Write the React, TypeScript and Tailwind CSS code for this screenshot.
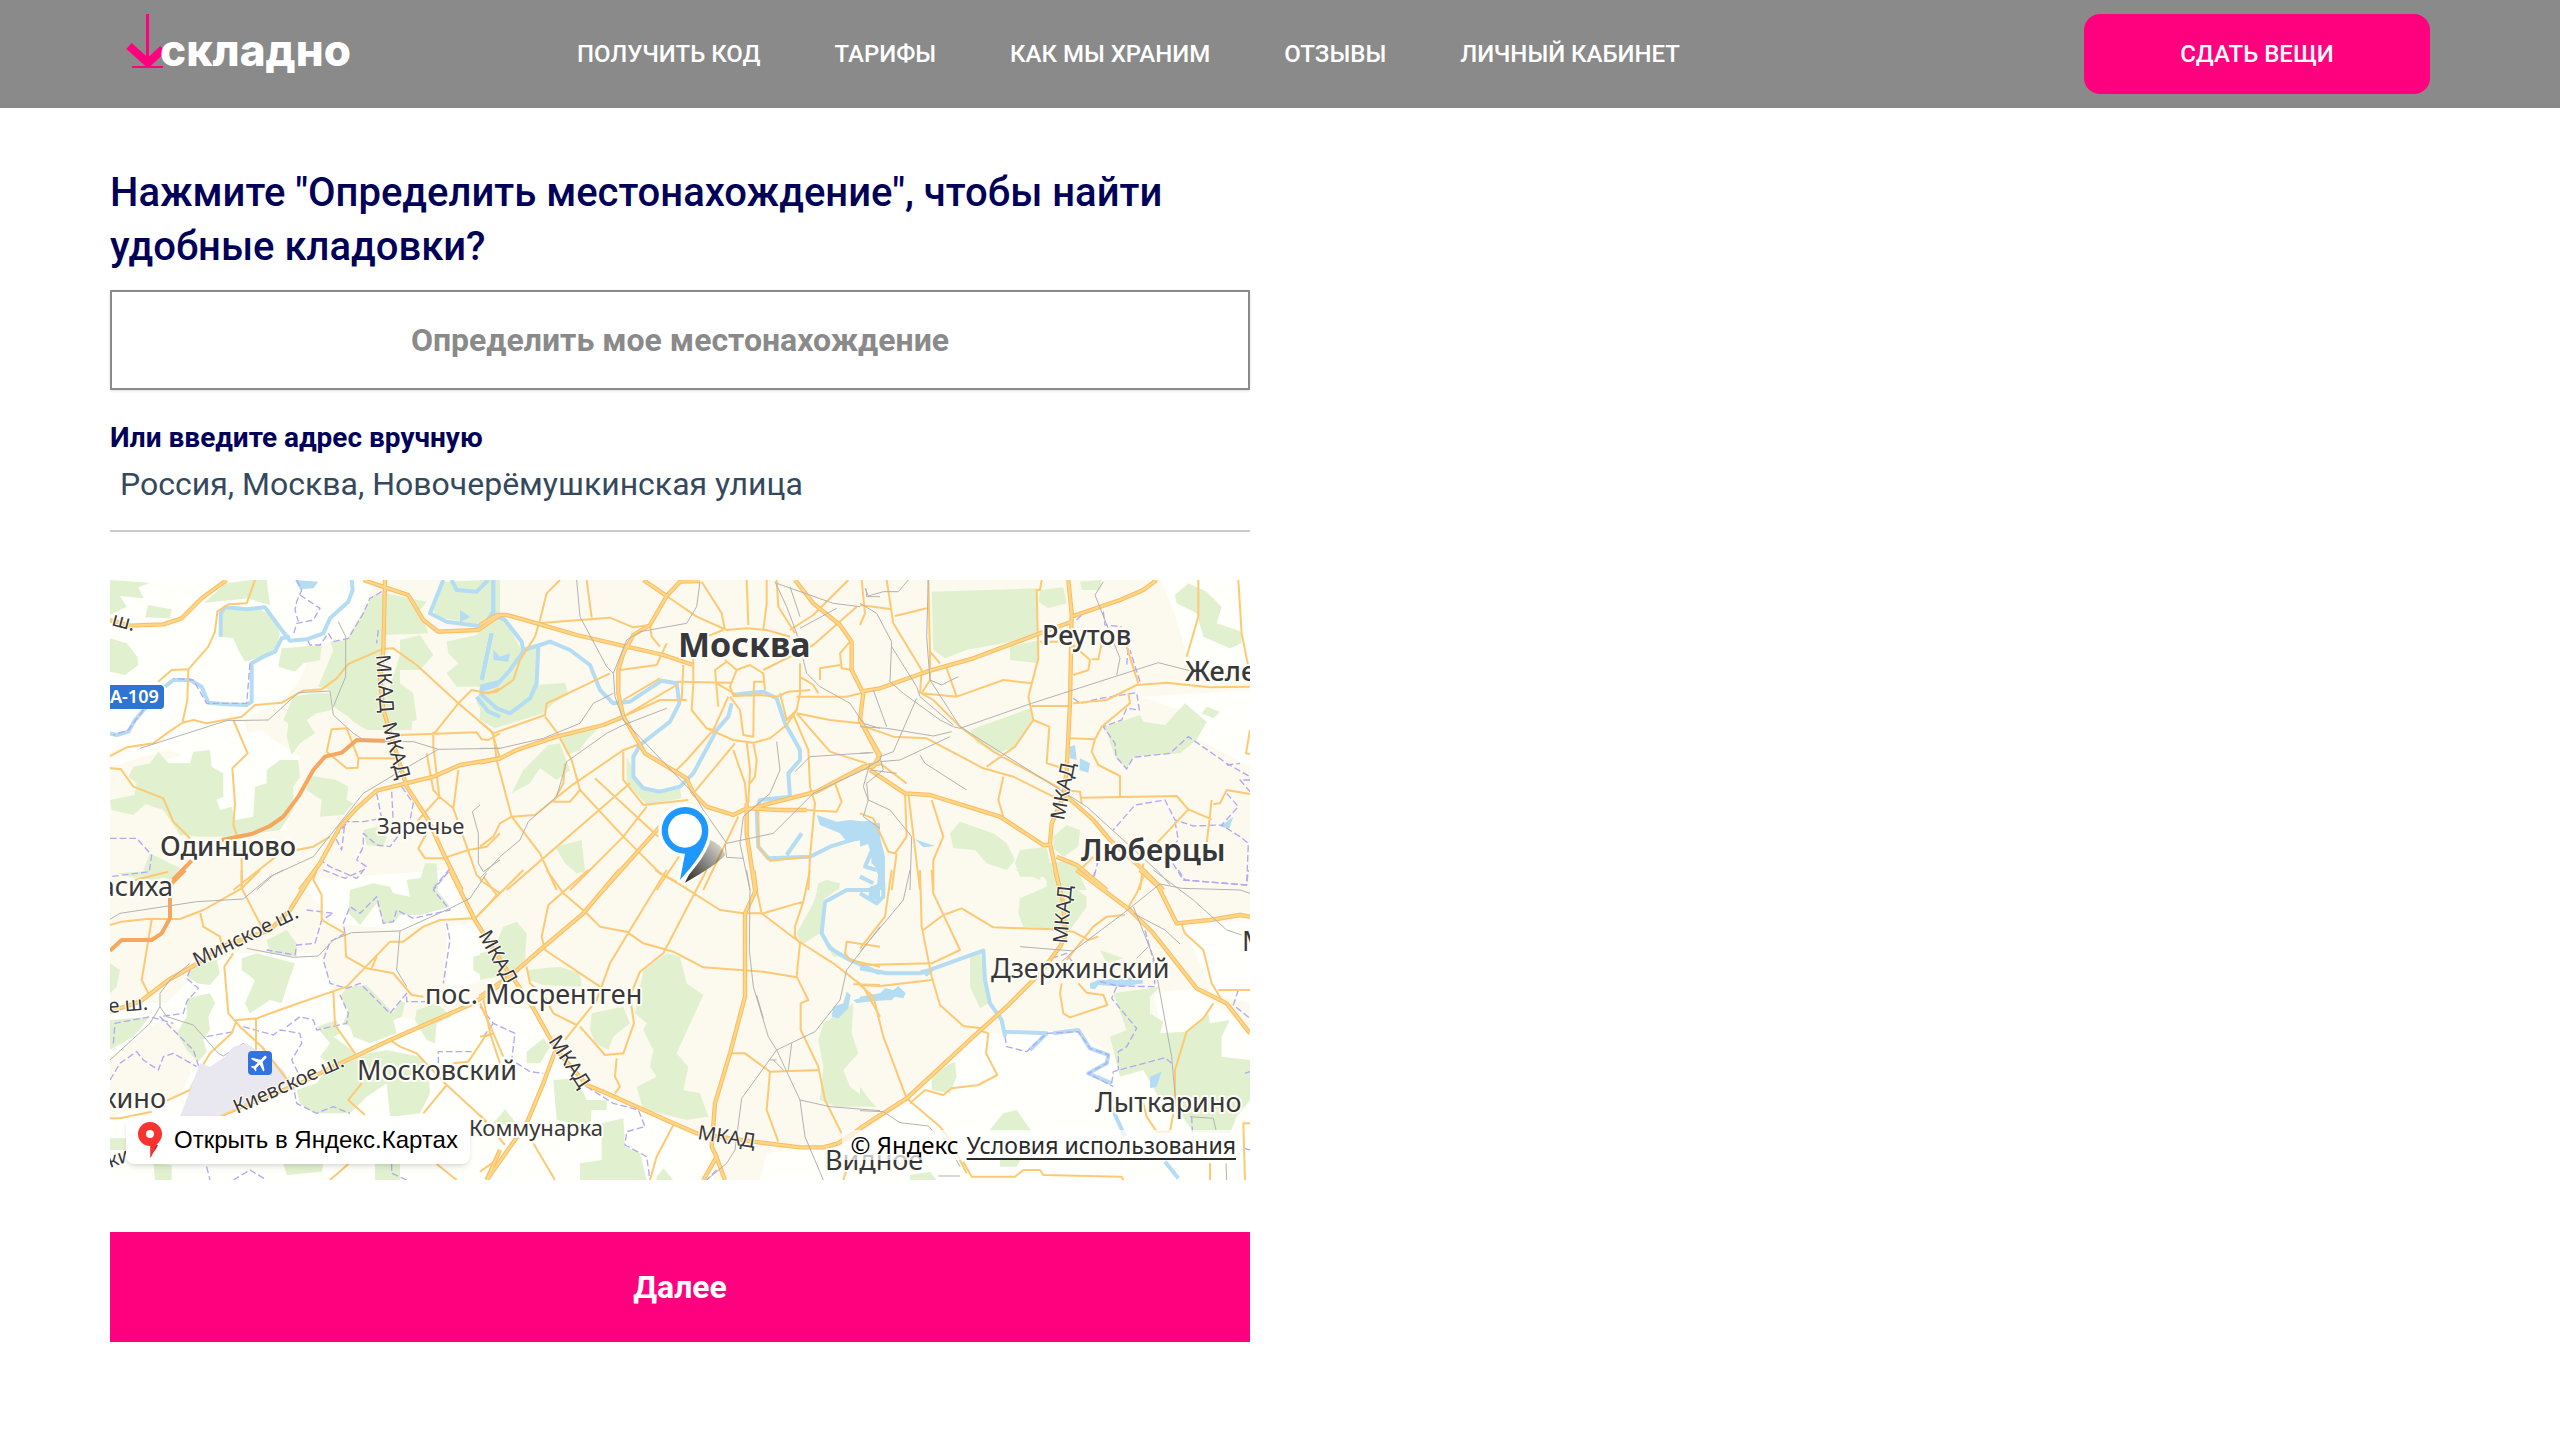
import { useState } from 'react';
import { MdFlight } from 'react-icons/md';

const navLinks = ['Получить код', 'Тарифы', 'Как мы храним', 'Отзывы', 'Личный кабинет'];

// Map geometry, split in 3x2 tiles. Units are thirds of a pixel.
const tiles = [
  {
    x: 0,
    y: 0,
    country: 'M30 30H830L740 210 640 225 600 330 550 390 430 450 470 560 400 600 200 540 30 590Z M130 590L300 540 480 480 600 560 560 780 420 800 200 700Z',
    green: 'M30 30L150 38 115 52 130 85 60 78 80 110 30 135Z M145 105L215 118 210 145 135 142Z M30 205L80 220 112 260 115 285 75 315 30 305Z M375 40L455 30 500 30 510 105 440 85 400 90 312 98 350 65Z M365 110L400 110 480 118 520 140 540 190 530 230 500 255 435 275 415 240 400 205 362 200 358 150Z M545 235L665 225 660 270 610 280 585 305 535 290Z M820 75L855 70 980 95 960 120 985 190 850 195 845 250 860 390 900 440 940 400 935 480 800 480 760 455 745 440 700 410 690 360 655 350 700 240 690 215 740 210 775 150Z M900 210L960 195 1000 255 960 300 900 300 900 340 940 370 950 450 890 470 860 380 900 255Z M1040 215L1130 195 1150 170 1180 30 1200 30 1200 470 1170 460 1130 400 1140 350 1070 350 1040 310 1075 280 1045 250Z M1030 35L1180 30 1180 130 1140 165 1010 140 1000 120Z M580 380L640 370 690 370 695 420 650 430 620 450 645 490 600 520 575 555 560 500 565 460 550 450Z M175 545L205 580 270 580 280 545 330 540 335 590 370 610 370 680 350 690 360 720 395 710 405 750 460 740 465 650 500 640 500 600 540 570 595 570 600 620 580 650 580 720 540 780 410 800 300 800 240 795 190 720 100 690 110 640 85 620 100 590 150 580Z M620 615L710 630 745 650 740 690 760 700 730 735 660 740 665 690 620 660Z M30 690L130 670 150 690 100 735 35 720Z M150 850L240 895 210 930 130 900Z M790 780L830 770 860 800 850 830 800 825Z M975 880L1010 880 1015 960 960 930Z',
    water: 'M585 30L655 35 640 55 600 58Z M1080 120L1110 140 1080 158Z',
    river: 'M755 30L758 60 745 95 690 145 670 190 620 208 570 212 545 180 495 112 440 118 375 112 362 130 362 200M570 200L545 205 525 245 490 260 455 280 455 395 440 405 380 403 325 398 305 350 270 330 220 330 195 350M140 410L105 450 85 485 50 495 30 490M1030 30L990 130 1040 155 1150 170 1180 125 1180 30M1055 30L1070 60 1130 65 1165 30M1175 190L1145 330M1130 380L1165 425 1200 440M1200 335L1140 350',
    orange: 'M855 512L770 510 725 548 675 560 640 600 595 680 550 740 510 768 455 792 365 810M275 872L218 930',
    major: 'M30 150L90 167 190 163 245 145 305 85 380 30M855 30L850 240 840 330 850 420 905 600 920 650 985 750 1030 850 1085 960M600 960L660 880 720 770 770 715 830 662 1000 620 1080 585 1200 565M790 30L855 52 925 75 970 150 1015 185 1135 180 1200 135',
    minor: 'M465 30L440 100 385 103 352 125 345 185 325 230 265 298 262 390 248 455M175 335L215 300 262 298M30 558L80 532 160 520 200 490 248 458 280 450 320 460 425 440 465 405 545 398 610 362 665 358 710 325 745 282 830 245 850 237 880 235 950 285 1075 400 1175 485 1200 565M1003 490L1075 400 1115 360 1165 370 1200 355M900 495L1130 487 1145 508 1165 510 1200 490M400 450L443 550 397 595 405 700 400 765 410 795M30 595L62 597 100 650 190 685 220 755 270 805M680 545L695 478 740 475 775 565 895 565M680 545L740 595 773 593 775 565M1000 485L1000 530 1018 680 1060 715 1130 915 1145 930M980 550L1000 660 1018 680 955 750 980 790 955 835 975 865 1030 865 1105 840 1160 830 1200 790M1075 600L1060 715M425 865L425 960M400 960L470 905 540 850 640 830 690 800',
    rail: 'M120 535L380 452 505 450 595 368 690 363 700 435 760 490 800 515 940 515 1015 538 1200 535M715 155L737 200 737 320 700 410M1015 538L890 610 790 670 640 860 520 915 470 960M1140 705L1117 725 1135 790 1135 880 1150 905 1200 870',
    border: 'M590 30L605 60 590 95 585 120 595 155M600 75L660 115 640 150 590 160 580 195M845 65L810 85 790 130 745 205 700 215 685 190 660 225 630 225 620 205M835 180L830 220M450 280L440 400 320 400 280 330 220 325M130 420L85 480 40 495M30 805L110 805 155 855 148 905 30 920M830 670L845 745 790 755 735 755 725 840 705 800 740 760M875 665L880 760M905 650L940 700 930 750 870 830 830 825 790 790 790 830 770 870 800 890 770 925 690 890 660 870M1050 895L1000 955',
  },
  {
    x: 1140,
    y: 0,
    country: '',
    green: 'M0 30L40 30 40 135 75 150 125 240 170 230 170 345 255 338 265 375 220 400 190 430 45 475 0 450Z M240 490L355 475 320 510 300 540 260 555Z M205 525L240 520 270 600 230 630 180 595 150 640 95 670 130 600Z M440 560L460 600 470 640 520 665 600 655 605 685 500 705 440 640Z M225 830L305 810 315 905 290 910 255 880Z M1015 940L1040 930 1080 945 1075 960 1010 960Z',
    water: 'M1010 735L1070 755 1110 750 1200 760 1200 930 1160 810 1100 815 1080 790 1020 765Z M40 240L60 260 90 250 85 275 40 270Z',
    river: 'M40 30L40 135 75 150 125 215 130 245 90 300 50 345 0 360M130 240L180 225 210 215 270 240 330 285 360 360 400 400 450 395 545 332 590 340 598 400 570 455 480 525 460 560 460 620 490 655 540 665 600 650 640 610 710 480 745 440 755 400M760 375L800 370 850 365 890 385 915 460 960 540 960 570 925 610 930 680 840 690 830 720 835 830 865 865 990 860 1050 830 1180 790M0 370L50 415 90 430 150 385 170 340 175 225M35 190L5 330M920 855L965 790',
    orange: '',
    major: 'M0 165L50 135 80 135 170 160 290 195 440 230 550 255 640 285M490 30L560 78 600 35 660 33M560 78L510 165 460 195 430 250 415 300 415 370 430 440 495 550 620 625 640 670 680 710 760 735 800 715 900 720 980 720M0 578L60 565 110 540 230 500 370 465 430 440M370 960L540 770M945 30L1000 100 1080 165 1115 215 1115 300 1150 370 1140 450 1200 565M1200 580L1150 590 1010 665 870 700 800 720M800 700L800 790 825 960',
    minor: 'M430 440L590 345M560 78L650 140 740 180 800 175 860 180 930 200M665 35L725 130 735 180M800 30L805 165M860 30L860 100 850 180M640 285L640 340 635 420 680 475 760 510 820 518 870 505 920 465 950 420 960 370 960 280M770 300L810 285 850 310 855 360M735 270L770 300 750 350 760 378 840 375 890 380 925 365 990 360M590 335L755 338M710 340L770 375M640 285L640 230 680 200 730 180M745 380L700 480 680 475M750 380L780 420 790 495 820 500 822 335 850 335M950 380L1100 380 1200 355M960 320L1000 345 1015 370M1115 300L1085 295 1080 250 1110 215M1020 330L1020 295 1080 285M950 430L1050 450 1140 460M950 430L1050 545 1160 580M940 435L985 540 990 650 1005 700 990 860 985 960M900 370L920 450 950 420M800 515L810 600 805 700M820 518L830 570 825 620 810 640M765 520L640 670M700 480L620 570 580 610M760 540L795 640 800 700M430 440L540 390 620 390M430 390L540 325M420 300L530 285M610 285L605 390M320 30L335 143M170 160L390 143 460 172 510 165M240 30L200 70 180 150 165 200 120 270 100 330 50 365 0 370M390 310L200 400 195 435 40 490M195 440L240 500M0 455L40 490 50 570 95 740 180 850 230 960M0 830L40 800 60 760 95 740 165 735 270 650 430 540 480 522M240 505L275 570 300 660 430 800 540 910 600 940M300 660L270 695 220 695 250 640 255 580M430 545L430 630 490 705 625 690M345 625L535 800M450 640L80 960M610 840L530 960M270 960L430 800 500 710M975 720L1070 725 1085 695 1065 640M835 700L835 830 870 872 990 860M775 740L670 960M1130 110L1000 225 850 300M1105 30L1000 135 930 180M890 30L895 110 945 190M530 285L560 220M510 165L515 200 540 230M740 275L705 300 715 410',
    rail: 'M290 30L300 140 380 290 400 310 405 380 430 450M660 35L650 110 620 160 480 185 440 210 400 310M0 535L60 535 190 505 300 460 340 400 400 370M560 415L430 465 380 490 260 575 230 680 145 755 120 810 60 860 0 925M430 450L640 670 670 720 740 820 880 790 1000 670 1150 600 1200 570M885 35L920 110 950 190 980 310 1020 350 1110 400 1150 460 1200 475M890 40L1060 100 1140 110M960 140L930 50M960 175L1070 115M1200 80L1160 80 1158 55M890 515L900 600 870 670 790 740 780 820 810 960M735 822L740 862 790 865M945 605L990 560 1170 548M1170 580L1150 650 1165 690 1150 740 1200 775',
    border: '',
  },
  {
    x: 2280,
    y: 0,
    country: 'M900 30H1170V340L1040 330 980 250 940 120Z M840 380L1170 360V590L1000 500 960 420Z',
    green: 'M215 65L530 55 535 200 320 240 255 265 220 240Z M540 60L610 52 620 100 565 115 535 95Z M450 230L540 210 535 280 450 270Z M330 480L510 415 518 455 465 530 415 550 350 520Z M945 75L985 40 1040 65 1085 110 1070 160 1145 185 1145 220 1110 235 1030 200 1010 130 950 100Z M735 470L840 435 850 455 915 465 975 400 1040 455 1010 510 960 550 820 560 800 595 765 560Z M1025 430L1040 410 1080 425 1060 445Z M270 790L300 755 400 790 440 820 465 870 440 900 380 880 345 840 280 835Z M480 840L560 830 570 880 640 870 680 960 580 960 550 920 480 920 465 880Z M580 800L620 765 660 780 655 830 610 860 580 835Z M660 35L725 30 720 60 665 60Z',
    water: 'M630 530L645 525 650 570 630 565Z M660 565L690 580 685 608 658 600Z M165 808L225 828 190 832Z M1080 770L1120 740 1108 775Z M0 755L30 752 60 800 75 860 75 960 50 960 55 900 35 880 30 820 0 830Z',
    river: 'M45 820L15 890 50 900M40 940L0 920',
    orange: '',
    major: 'M625 30L635 130 630 400 620 600 610 680 575 760 570 820 600 960M0 365L60 355 200 305 340 265 540 190 635 155M635 140L780 90 850 60 890 30M0 450L60 555 40 590 0 595M30 600L135 670 210 675 420 740 550 825 570 825M610 670L700 750 750 810 850 900 910 960M590 860L650 885 740 960',
    minor: 'M205 30L210 250 210 330 185 370 220 390 300 470 400 545 600 655M545 30L540 60 530 60 535 265 505 380 520 450 465 530 380 590M0 105L95 118M105 138L200 115M80 30L100 160 185 300 180 370M185 370L290 380 430 330 515 340M210 245L240 280M260 295L290 380M640 400L740 390 830 345 920 338 1050 352 1170 350M640 315L685 300 690 270 640 225M695 268L715 268 725 220M640 215L540 215M800 230L835 340M515 408L630 408M520 450L568 470 560 580 610 595M630 505L705 508 695 545 715 585 780 618 780 678M705 508L725 470 810 400 805 370M665 683L950 678 985 718 1055 748M985 718L890 820M1055 690L1040 820M1170 480L1158 550 1170 552M1170 672L1100 660 1080 700 1060 703M1015 30L1015 140 980 260M1135 30L1145 190 1165 290M0 465L100 500 200 505 370 595 460 620 590 685M430 620L415 690 430 740M135 670L140 800 105 850 85 845 40 745 0 730M145 670L180 960M215 690L250 800 220 870 220 960M110 850L95 960M60 580L140 640M610 660L660 665 665 700M840 960L850 880M5 30L15 130 0 165M700 860L660 900',
    rail: 'M205 30L200 200 210 330 300 470 680 710 900 910 930 945M15 55L25 78 70 65 115 65 145 30M0 100L50 130 95 215 90 335 130 370 240 450 280 470 300 475 515 400 895 278 1000 305M730 35L705 75 780 265 770 315M95 230L170 350 180 380 280 465M40 360L80 470M0 470L80 475 220 498 275 485M170 385L100 545 60 560M0 550L40 548M60 575L120 570 270 500M180 555L195 580 320 660M60 560L70 600 20 640 25 690 90 720 155 800 150 960M30 600L110 610M210 330L245 345 295 320',
    border: 'M730 125L735 165 785 170M805 235L800 285M640 385L660 400 720 385 830 368 838 420 800 415 785 450 730 470 765 520 768 560 800 597 820 562 930 550 985 500 1100 580 1170 620M1100 585L1140 580M1170 630L1140 630 1170 665M1100 670L1135 710 1085 765 1000 768 945 750 915 690 825 705 760 780M945 755L955 810 920 850 970 930 1160 945 1165 820 1140 800 1085 765M715 870L700 930M650 150L665 135M840 335L810 240',
  },
  {
    x: 0,
    y: 900,
    country: 'M30 390L200 400 300 300 400 250 660 250 700 380 900 440 1000 460 1130 400 1160 500 1200 620 1200 930H30V740L240 680 300 540 200 440 30 560Z M600 30L1050 0 1100 140 900 180 700 160Z M1040 170L1130 160 1200 300 1040 380Z',
    green: 'M50 10L200 0 240 0 170 30 110 25Z M30 280L60 300 50 350 30 370Z M270 290L350 270 360 310 330 345 290 340 265 320Z M425 265L470 250 585 280 560 350 545 400 510 390 450 430 435 400 465 330 425 300Z M500 210L560 180 590 220 590 260 510 250Z M260 385L330 370 345 400 325 440 330 480 310 510 320 545 295 575 260 540 230 490 260 440Z M750 60L820 40 870 50 880 70 930 80 920 30 980 20 1050 110 960 135 900 135 880 160 850 160 830 100 780 165 745 130Z M740 350L800 345 880 430 900 390 915 400 905 440 880 450 890 490 810 520 760 500 750 470 730 460 745 420 720 380Z M650 470L710 450 720 490 700 500 770 550 710 600 660 560 690 520Z M700 570L860 540 960 560 985 600 990 670 960 730 870 740 860 640 800 680 750 730 690 730 640 730 600 700 590 660 650 640Z M1120 260L1200 240 1200 310 1150 320 1120 300Z M950 420L1010 400 1055 440 1010 460 1005 520 980 510 945 450Z M30 450L150 440 100 500 30 540Z M160 880L215 885 215 930 165 930Z M550 882L670 882 665 905 560 915Z M825 882L900 882 900 930 825 930Z M30 805L80 805 80 840 30 840Z',
    water: '',
    river: '',
    orange: 'M255 0L210 45 210 145 185 190 155 210 65 210 30 242',
    major: 'M645 0L570 120 510 180 365 230 285 285 205 330 120 395 30 425M350 740L600 640 700 590 870 510 1120 400 1200 345M1050 0L1125 150 1150 190 1240 330M1200 840L1160 930',
    minor: 'M480 0L425 55 310 120 240 147 140 147 65 155 30 165M425 0L425 55 490 180M300 125L310 170 360 200 365 225M155 150L125 330 145 370M105 30L205 5M400 250L373 290 385 430 420 470 485 530 570 640M200 692L270 660 300 600 330 550 395 490 410 450 470 445 580 405 740 350 870 215 910 215 970 170 1020 150 1125 145M468 445L468 530M700 365L705 465 765 550M650 0L640 30 665 75 665 150 735 190 738 260 800 295 880 310 935 375 970 380M830 260L815 295M1125 145L1160 110 1190 75 1150 20M870 510L900 530 950 550 1040 645 1160 755M1040 645L970 730M785 640L745 690 795 735M1150 385L1170 490 1200 580M1180 490L1155 500 1105 575 1060 580M30 745L60 745 155 725M745 882L690 930M1010 882L1070 930',
    rail: 'M550 0L510 20 430 87 290 95 60 130 30 148M30 570L150 460 180 410 180 370 210 330 270 280M180 410L200 440 280 465 355 550 370 558 430 520 450 535M440 235L580 262 655 258 700 210 755 188 900 183 1050 115 1110 85 1160 10M900 183L890 300 920 350',
    border: 'M620 120L700 130 665 150 645 220 590 225 585 255 500 240M270 300L260 325 295 355 260 395 250 430 180 440 280 540 300 600 270 680 260 735M670 0L735 25 790 0M735 190L730 160 750 110 780 130 830 80 850 160 880 155 890 120 940 145 1050 120 1000 60 1050 0M735 190L690 215 670 270 690 340 740 355 780 340 870 430 920 370 920 395 975 395M1040 160L1050 210 1030 340M430 470L520 495 540 480 600 490 605 520 575 570 600 620 580 650 590 700 650 730 700 710 750 730M40 520L45 460 150 440 220 460M30 630L60 580 110 545 130 570 175 600 190 560 220 550 290 590M560 470L600 440 640 450 650 480 740 460 745 430 720 375M320 500L400 485M1015 580L1015 545 1115 545M320 890L330 930M400 930L450 900 500 930M875 882L875 910 920 930',
  },
  {
    x: 1140,
    y: 900,
    country: 'M0 400L160 420 230 540 330 660 560 760 690 820 700 930H0Z M860 850L1200 800V930H840Z',
    green: 'M70 170L110 155 140 190 135 270 110 300 50 320 0 330 0 250 40 240Z M140 300L240 290 300 310 305 350 190 345 150 330Z M490 300L560 250 600 260 620 340 670 375 590 550 625 590 610 660 660 670 685 740 620 750 540 730 490 720 470 650 530 620 510 590 520 540 490 480 500 460 465 430Z M335 430L430 410 450 460 400 500 385 540 345 520 330 480Z M140 545L190 505 210 530 180 580 140 580Z M220 630L290 625 320 690 380 690 380 720 335 720 330 770 230 750Z M365 760L430 745 435 830 480 850 500 930 300 930 300 880 365 870Z M530 920L550 895 580 930 530 930Z M1015 50L1040 30 1080 40 1070 60 1030 90 1020 190 965 225 950 190 1000 100Z M1030 460L1120 400 1115 490 1135 550 1090 600 1110 650 1190 710 1070 710 1020 690 1030 590 1015 510Z M1030 200L1090 260 1060 260Z M40 760L75 718 105 755 80 765Z',
    water: 'M1100 365L1112 375 1105 415 1075 445 1055 440 1060 410 1090 400Z M1120 390L1200 370 1200 390 1130 400Z M1170 50L1200 40 1200 95 1165 80Z',
    river: 'M1200 60L1100 60 1035 95 1025 190 1050 235 1100 265 1200 310',
    orange: '',
    major: 'M420 0L310 130 180 240 100 310 0 380M100 325L160 415 230 540 320 645 380 670 570 755 650 790 820 815 960 832 1030 832 1075 820M225 545L190 640 140 760 20 930M1200 735L1120 790 1075 820M820 0L828 60 795 130 795 380 750 550 705 700 695 830 710 860 670 930M705 850L735 930',
    minor: 'M0 30L60 70 130 0M60 70L0 130M200 0L250 70 320 130 360 170 440 185 490 220 580 245 670 292 850 305 950 322M560 0L450 180 390 280 350 390 255 510M525 0L610 50 720 120 790 130 850 130 970 95 990 0M680 0L550 250 480 305 450 380 462 460 430 550 375 555 300 470M325 0L205 105 185 200 195 240 360 350M830 60L845 130 950 210 1060 280 1150 350 1200 440M970 95L945 170 945 200 960 220 950 320 985 390 962 400 962 480 1015 590 1035 690 1085 790M755 550L795 550 870 605 1015 600M870 605L860 720 895 815M410 565L405 620 420 650 405 670M580 765L530 860 510 930M0 400L40 490 70 560M0 500L40 490M140 290L150 340 190 375 220 430 290 465M160 820L225 930M75 825L0 735M0 905L50 870M1200 230L1100 215 1095 250 1110 270 1200 290M1120 343L1200 345M1110 870L1090 930',
    rail: 'M800 0L810 60 808 240 820 350 865 500 890 540 960 690 975 800 1030 930M1200 170L1100 300 1080 390 1005 485 890 540 785 685 765 840 740 880 680 930M830 375L850 445M880 570L910 600M935 520L925 600M960 690L1050 710 1200 722M870 570L890 570',
    border: 'M0 410L40 460 105 490 95 570 150 605 190 610M320 650L400 700 475 720 495 770 440 785 435 825 500 860 510 930M10 500L40 460M710 900L680 930',
  },
  {
    x: 2280,
    y: 900,
    country: 'M420 490L660 480 760 560 900 460 880 370 1000 355 1170 480V930H0V790L150 690 360 490Z M970 170L1170 150V400L1060 370Z',
    green: 'M480 85L560 50 560 10 620 0 640 50 680 80 680 110 630 180 490 170 475 130Z M465 0L550 0 540 30Z M330 250L360 245 370 300 385 400 360 415 330 350Z M215 610L285 575 290 620 270 670 215 660Z M385 785L430 730 470 720 515 785Z M760 370L900 350 870 380 870 430 910 455 900 490 975 485 1045 430 1050 460 1110 450 1085 500 1085 560 1170 570 1170 690 1130 740 1110 790 1000 785 960 730 900 690 850 600 780 620 750 500 800 480Z M720 240L790 265 740 280Z M0 650L45 710 0 705Z M420 855L490 855 470 890 420 890Z M150 915L210 905 230 930 150 930Z',
    water: 'M690 340L715 330 845 320 850 340 790 350 715 345 705 358 690 355Z M870 620L905 605 890 650 870 655Z M0 380L60 370 75 355 100 360 115 348 137 370 130 385 105 380 95 390 0 395Z M180 300L230 295 200 320Z',
    river: 'M0 295L80 310 180 310 370 242 375 330 390 400 425 450 435 500M435 485L560 490 510 540M580 490L655 480 690 535 745 555 740 580 685 610 755 640M745 690L795 800M915 875L955 925M0 70L50 100 70 80 70 40 55 0',
    orange: '',
    major: 'M585 0L610 100 615 200 600 230 540 310 440 410 340 500 140 685 0 775M650 0L810 120 880 190 1010 355 1100 400 1170 490M840 0L895 50 950 160 1050 150 1140 135 1170 140',
    minor: 'M965 165L975 190 1030 240 1055 340 1085 390M620 270L700 170 740 140 795 135M180 0L185 170 215 320 240 405 310 468 365 475M0 345L40 380 70 500 140 685 240 770 270 810 320 910M215 0L220 70 300 240 215 280 0 285M190 180L250 135 305 115 400 172 580 178 640 185 685 210 715 200M0 345L60 348 215 330M355 480L385 490 378 550 412 615 355 645 275 655 250 675 195 660 150 700M605 340L600 370 610 430 630 442 742 405 730 375 680 368 655 340M1060 400L1030 445 980 485 945 600 945 700 930 785 890 785 860 740 850 700M1075 360L1170 360M850 20L830 70 800 120M0 235L75 140 95 0M310 875L335 920 465 920 490 900 540 900 550 915 785 920 790 930M1050 880L1050 930M1170 760L1150 760 1155 930',
    rail: 'M150 0L130 90 80 150 0 245M480 230L640 243 790 130 900 42 965 55 1140 60 1170 70M640 243L605 275M820 110L880 260 935 560 950 730M820 130L915 180 960 222M880 0L1000 90 1100 180 1145 195M0 722L70 725 120 758 205 768 225 790M990 740L1060 745 1068 780M235 918L300 918M250 800L300 890M1098 880L1100 930M830 265L865 230',
    border: 'M720 335L775 348 885 350 880 270 855 180M770 350L755 385 830 475 800 530 775 545 775 600M755 640L760 605 915 563 935 580M435 500L440 530 500 545 560 490 655 485 690 535 745 555 740 580 685 610 760 650M1135 360L1120 405 1170 445M955 0L975 30 1160 45 1165 0M700 25L705 0M575 265L620 250 640 280M1155 610L1170 605M1155 835L1170 840M995 740L998 800',
  },
];

const layers = [
  { key: 'country', fill: '#fffffb', stroke: 'none', width: 0 },
  { key: 'green', fill: '#e1f1cf', stroke: 'none', width: 0 },
  { key: 'water', fill: '#b4dcf3', stroke: 'none', width: 0 },
  { key: 'river', fill: 'none', stroke: '#b4dcf3', width: 12 },
  { key: 'border', fill: 'none', stroke: '#b3a8f2', width: 4, dash: '20 9' },
  { key: 'minor', fill: 'none', stroke: '#fdc974', width: 6 },
  { key: 'major', fill: 'none', stroke: '#fbbd5c', width: 13 },
  { key: 'major', fill: 'none', stroke: '#fdd58b', width: 7 },
  { key: 'orange', fill: 'none', stroke: '#f6a65e', width: 12 },
  { key: 'rail', fill: 'none', stroke: '#b2b2b2', width: 3 },
];

const cities = [
  { name: 'Москва', x: 568, y: 77, size: 34, weight: 700 },
  { name: 'Люберцы', x: 971, y: 281, size: 30, weight: 600 },
  { name: 'Одинцово', x: 50, y: 276, size: 27, weight: 500 },
  { name: 'Реутов', x: 932, y: 65, size: 27, weight: 500 },
  { name: 'Железнодорожный', x: 1075, y: 101, size: 27, weight: 500 },
  { name: 'Московский', x: 247, y: 500, size: 27, weight: 400 },
  { name: 'пос. Мосрентген', x: 315, y: 424, size: 27, weight: 400 },
  { name: 'Дзержинский', x: 881, y: 398, size: 27, weight: 400 },
  { name: 'Лыткарино', x: 985, y: 532, size: 27, weight: 400 },
  { name: 'Видное', x: 715, y: 590, size: 27, weight: 400 },
  { name: 'М', x: 1132, y: 371, size: 27, weight: 400 },
  { name: 'Заречье', x: 267, y: 254, size: 22, weight: 400 },
  { name: 'Коммунарка', x: 359, y: 556, size: 22, weight: 400 },
];

// these run off the left edge of the map, so they hang from their right end
const edgeCities = [
  { name: 'Власиха', x: 63, y: 316 },
  { name: 'Кокошкино', x: 56, y: 528 },
];

const roadNames = [
  { name: 'МКАД', x: 266, y: 75, angle: 86 },
  { name: 'МКАД', x: 272, y: 144, angle: 75 },
  { name: 'МКАД', x: 954, y: 241, angle: -79 },
  { name: 'МКАД', x: 957, y: 364, angle: -85 },
  { name: 'МКАД', x: 368, y: 355, angle: 61 },
  { name: 'МКАД', x: 438, y: 461, angle: 57 },
  { name: 'МКАД', x: 587, y: 559, angle: 9 },
  { name: 'Минское ш.', x: 87, y: 387, angle: -26 },
  { name: 'Киевское ш.', x: 127, y: 534, angle: -24 },
  { name: 'е ш.', x: -1, y: 433, angle: -5 },
  { name: 'ш.', x: 1, y: 45, angle: 15 },
  { name: 'ки', x: 0, y: 588, angle: -20 },
];

const Logo = () => (
  <a href="#" aria-label="Складно" className="flex h-14 w-[222px] items-end text-white">
    <svg viewBox="0 0 38 56" className="h-14 w-[38px] shrink-0 text-[#ff007f]" fill="none" stroke="currentColor">
      <path d="M21.5 0V50" strokeWidth="3" />
      <path d="M3 32L22 49L37 35" strokeWidth="8" />
      <path d="M6 53H37" strokeWidth="2" />
    </svg>
    <span className="-ml-1 font-['Inter'] text-[44px] leading-10 font-extrabold">складно</span>
  </a>
);

const Header = () => (
  <header className="flex h-[108px] items-start bg-[#8a8a8a] pt-3.5 pr-[130px] pl-[126px]">
    <Logo />
    <nav className="ml-[229px] flex h-20 items-center gap-[74px]">
      {navLinks.map((link) => (
        <a key={link} href="#" className="text-[24px] leading-8 font-medium whitespace-nowrap text-white uppercase">
          {link}
        </a>
      ))}
    </nav>
    <button className="ml-auto h-20 w-[346px] rounded-2xl bg-[#ff007f] text-[24px] font-medium text-white uppercase">
      Сдать вещи
    </button>
  </header>
);

const MapPin = () => (
  <g>
    <defs>
      <linearGradient id="pinShadow" x1="0" y1="1" x2="1" y2="0">
        <stop offset="0" stopColor="#000" stopOpacity="0.85" />
        <stop offset="1" stopColor="#000" stopOpacity="0.05" />
      </linearGradient>
    </defs>
    <path d="M1755 938L1800 845L1825 808Q1865 822 1876 855Q1850 885 1755 938Z" fill="url(#pinShadow)" />
    <path
      d="M1740 930L1755 851A70 70 0 1 1 1825 782C1825 835 1775 890 1740 930Z"
      fill="#1e98ff"
      stroke="#fff"
      strokeWidth="20"
      strokeLinejoin="round"
      paintOrder="stroke"
    />
    <circle cx="1755" cy="782" r="51" fill="#fff" />
  </g>
);

const MoscowMap = () => (
  <svg
    viewBox="0 0 1140 600"
    preserveAspectRatio="xMidYMid slice"
    className="block h-full w-full bg-[#fcf9ee] font-['Noto_Sans',sans-serif]"
    role="img"
    aria-label="Карта Москвы"
  >
    <g transform="scale(0.33333) translate(-30 -30)" strokeLinejoin="round">
      {layers.map((layer, i) => (
        <g key={i} fill={layer.fill} stroke={layer.stroke} strokeWidth={layer.width} strokeDasharray={layer.dash}>
          {tiles.map((tile) => (
            <path key={`${tile.x}-${tile.y}`} d={tile[layer.key]} transform={`translate(${tile.x} ${tile.y})`} />
          ))}
        </g>
      ))}
      {/* Vnukovo airfield */}
      <path d="M330 1490L375 1460L400 1430L440 1420L550 1500L570 1540L350 1640H240L270 1560L300 1480Z" fill="#e9e8f1" />
      <path d="M485 1430L570 1540M468 1345V1440" stroke="#fdc974" strokeWidth="6" fill="none" />
    </g>

    <rect x="-6" y="105" width="60" height="24" rx="4" fill="#2e74d2" />
    <text x="0" y="123" fontSize="18" fontWeight="600" fill="#fff">А-109</text>

    <rect x="138" y="471" width="24" height="24" rx="4" fill="#3273df" />
    <g transform="rotate(45 150 483) translate(139 472)">
      <MdFlight size={22} color="#fff" />
    </g>

    <g fill="#37383b" stroke="#fffdf6" strokeWidth="4" strokeLinejoin="round" paintOrder="stroke">
      {roadNames.map((road, i) => (
        <text key={i} fontSize="20" strokeWidth="2" transform={`translate(${road.x} ${road.y}) rotate(${road.angle})`}>
          {road.name}
        </text>
      ))}
      {edgeCities.map((city) => (
        <text key={city.name} x={city.x} y={city.y} fontSize="27" textAnchor="end">{city.name}</text>
      ))}
      {cities.map((city) => (
        <text key={city.name} x={city.x} y={city.y} fontSize={city.size} fontWeight={city.weight}>{city.name}</text>
      ))}
    </g>

    <g transform="scale(0.33333) translate(-30 -30)">
      <MapPin />
    </g>
  </svg>
);

const MapView = () => (
  <div className="relative mt-12 h-[600px] overflow-hidden">
    <MoscowMap />
    <a
      href="#"
      className="absolute bottom-4 left-4 flex h-12 items-center gap-3 rounded-lg bg-white px-3 font-['Liberation_Sans',sans-serif] text-[24px] whitespace-nowrap text-black shadow-md"
    >
      <svg viewBox="0 0 24 36" className="h-9 w-6">
        <path d="M12.500 36V23H20C18 28 14 31 12.500 36Z" fill="#c2161d" />
        <path d="M12.500 36V24A12 12 0 1 1 24 12C24 17 21 20 18.500 23Z" fill="#f8332f" />
        <circle cx="12" cy="12" r="4" fill="#fff" />
      </svg>
      Открыть в Яндекс.Картах
    </a>
    <div className="absolute right-3.5 bottom-5 flex h-[30px] items-center gap-2 bg-white/70 pl-2 font-['Noto_Sans',sans-serif] text-[24px] whitespace-nowrap text-black">
      <span>© Яндекс</span>
      <a href="#" className="text-[23px] text-[#2b2b2b] underline underline-offset-4">Условия использования</a>
    </div>
  </div>
);

const App = () => {
  const [address, setAddress] = useState('Россия, Москва, Новочерёмушкинская улица');

  return (
    <div className="bg-white font-['Roboto',sans-serif]">
      <Header />
      <main className="grid grid-cols-2 gap-[60px] px-[110px] pt-[58px] pb-[100px]">
        <section className="flex flex-col">
          <h1 className="text-[40px] leading-[54px] font-medium text-[#000058]">
            Нажмите "Определить местонахождение", чтобы найти удобные кладовки?
          </h1>
          <button className="mt-4 h-[100px] border-2 border-[#8a8a8a] bg-white text-[32px] font-bold text-[#8a8a8a] shadow-sm">
            Определить мое местонахождение
          </button>
          <label htmlFor="address" className="mt-8 text-[28px] leading-8 font-bold text-[#000058]">
            Или введите адрес вручную
          </label>
          <input
            id="address"
            value={address}
            onChange={(e) => setAddress(e.target.value)}
            className="h-[78px] border-b-2 border-[#cacaca] px-2.5 pb-4 text-[32px] text-[#34495e] outline-none"
          />
          <MapView />
          <button className="mt-[52px] h-[110px] bg-[#ff007f] text-[32px] font-bold text-white">Далее</button>
        </section>
      </main>
    </div>
  );
};

export default App;
